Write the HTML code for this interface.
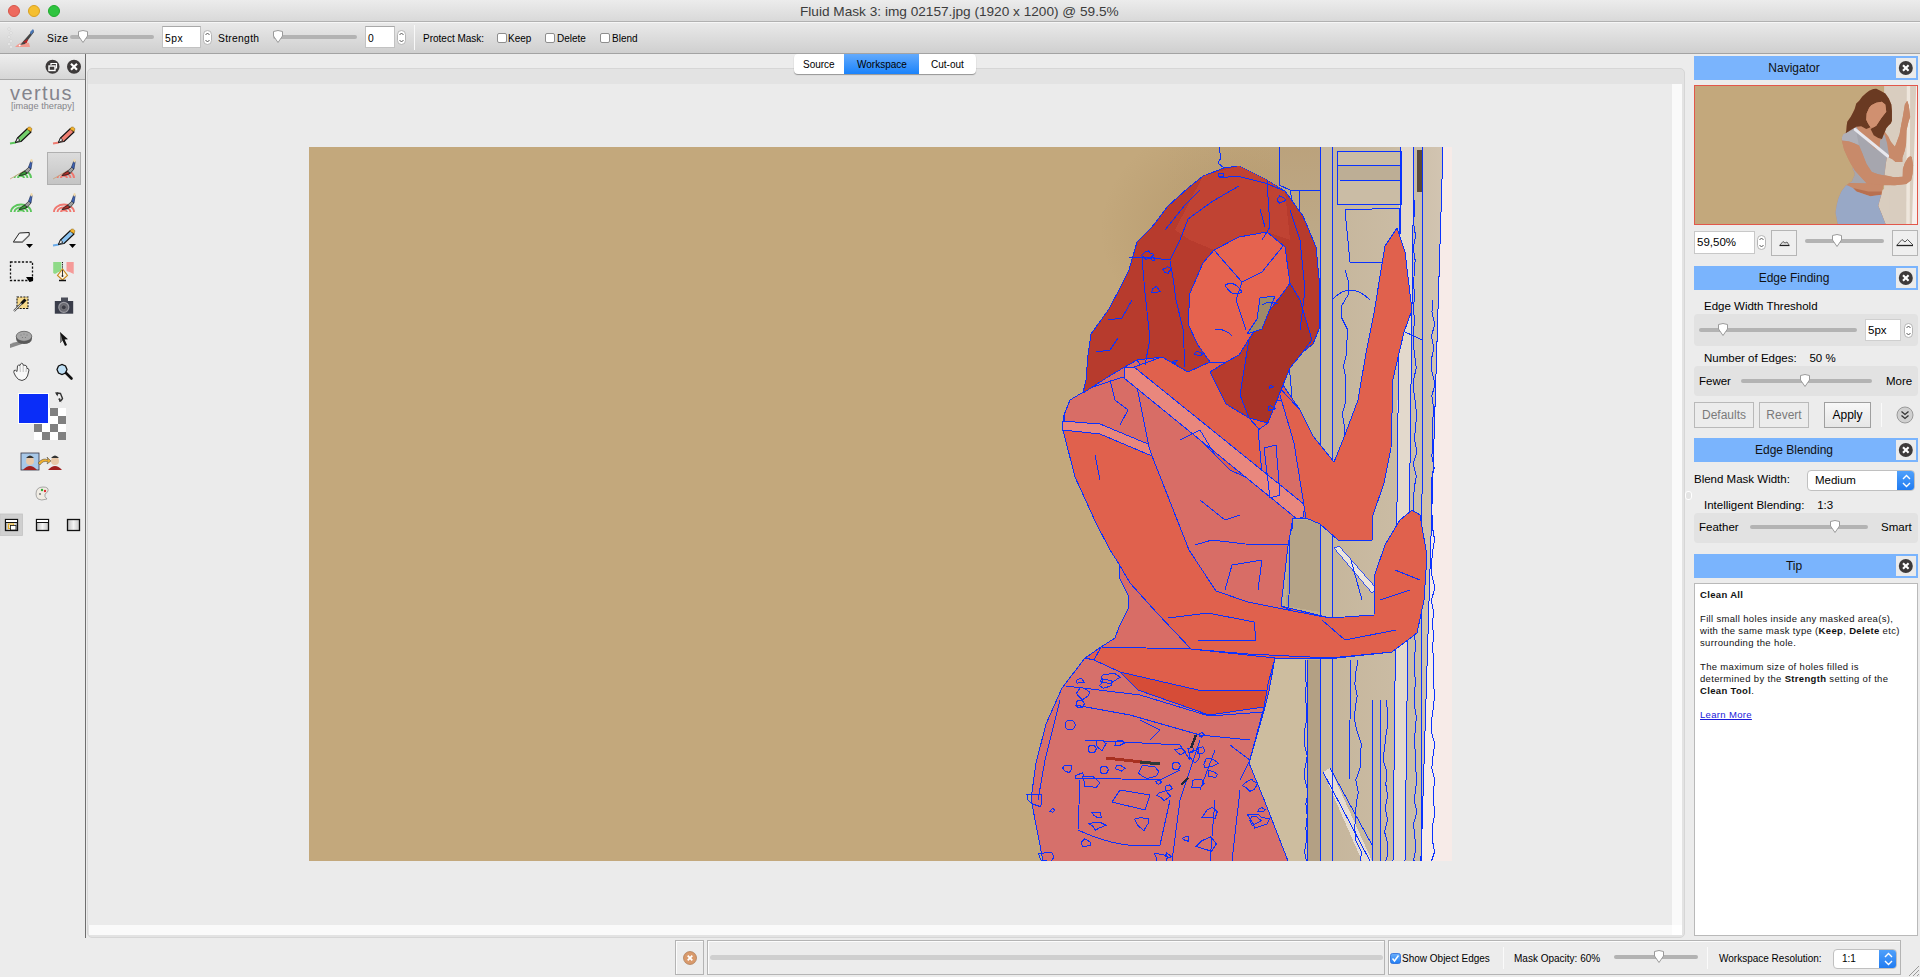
<!DOCTYPE html>
<html><head><meta charset="utf-8">
<style>
*{margin:0;padding:0;box-sizing:border-box}
html,body{width:1920px;height:977px;overflow:hidden;background:#ececec;font-family:"Liberation Sans",sans-serif;color:#000}
.a{position:absolute}
.t{position:absolute;white-space:nowrap;font-size:11px;line-height:13px}
#title{left:0;top:0;width:1920px;height:22px;background:linear-gradient(#ececec,#d9d9d9);border-bottom:1px solid #b1b1b1}
#toolbar{left:0;top:22px;width:1920px;height:32px;background:linear-gradient(#e9e9e9,#cfcfcf);border-top:1px solid #f6f6f6;border-bottom:1px solid #a3a3a3}
.light{position:absolute;width:12px;height:12px;border-radius:50%}
.track{position:absolute;height:4px;background:#b3b3b3;border-radius:2px}
.thumb{position:absolute;width:12px;height:14px}
.inp{position:absolute;background:#fff;border:1px solid #c2c2c2;border-top-color:#a8a8a8}
.step{position:absolute;width:9px;height:15px;background:#fff;border:1px solid #b9b9b9;border-radius:5px}
.cb{position:absolute;width:10px;height:10px;background:#fff;border:1px solid #8e8e8e;border-radius:2px}
.hdr{position:absolute;left:1694px;width:224px;height:24px;background:#7ab4fd;font-size:12px;line-height:24px;text-align:center;color:#111;padding-right:24px}
.hdr .x{position:absolute;right:2px;top:2px;width:20px;height:20px;background:#ebebeb}
.closec{position:absolute;width:14px;height:14px;border-radius:50%;background:#3a3a3a}
.grp{position:absolute;left:1694px;width:224px;background:#e2e2e2;border-radius:4px}
.btn{position:absolute;border:1px solid #b9b9b9;background:#ececec;font-size:12px;text-align:center}
</style></head><body>

<!-- title bar -->
<div id="title" class="a"></div>
<div class="light" style="left:8px;top:5px;background:#ee6a5e;border:1px solid #d65548"></div>
<div class="light" style="left:28px;top:5px;background:#f5bf2f;border:1px solid #d9a020"></div>
<div class="light" style="left:48px;top:5px;background:#2ec43f;border:1px solid #1faa2c"></div>
<div class="t" style="left:800px;top:4px;font-size:13.65px;line-height:15px;color:#3c3c3c">Fluid Mask 3: img 02157.jpg (1920 x 1200) @ 59.5%</div>

<!-- toolbar -->
<div id="toolbar" class="a"></div>
<svg class="a" style="left:6px;top:27px" width="30" height="22" viewBox="0 0 30 22">
 <g fill="#f4f4f4" stroke="#c9c9c9" stroke-width="0.6"><circle cx="3" cy="2" r="1.3"/><circle cx="5" cy="6" r="1.3"/><circle cx="3" cy="10" r="1.3"/><circle cx="5" cy="14" r="1.3"/><circle cx="3" cy="17" r="1.3"/><circle cx="5" cy="20" r="1.3"/></g>
 <path d="M9 20 Q16 13 23 16 L24 20 Z" fill="#f29a8f"/>
 <path d="M13 19 Q18 14 22 15" stroke="#fff" stroke-width="1.2" fill="none"/>
 <path d="M14 18 L27 3 L28 5 L19 17 Z" fill="#444"/>
 <path d="M17 15 L22 12 L21 16 Z" fill="#b22"/>
 <path d="M24 5 L27 2 L28 4 L25 8 Z" fill="#4a78b8"/>
</svg>
<div class="t" style="left:47px;top:32px;font-size:10.3px;letter-spacing:0.3px">Size</div>
<div class="track" style="left:70px;top:35px;width:84px"></div>
<svg class="thumb" style="left:77px;top:30px" width="12" height="14" viewBox="0 0 12 14"><path d="M1.5 1.5 Q6 -0.5 10.5 1.5 L10.5 6 L6 12.5 L1.5 6 Z" fill="#fff" stroke="#9a9a9a" stroke-width="1"/></svg>
<div class="inp" style="left:162px;top:26px;width:39px;height:22px"></div>
<div class="t" style="left:165px;top:32px;font-size:10.3px;letter-spacing:0.5px">5px</div>
<svg class="a" style="left:203px;top:30px" width="9" height="15" viewBox="0 0 9 15"><rect x="0.5" y="0.5" width="8" height="14" rx="4" fill="#fff" stroke="#b5b5b5"/><path d="M2.5 5 L4.5 3 L6.5 5 M2.5 10 L4.5 12 L6.5 10" stroke="#444" fill="none" stroke-width="0.9"/></svg>
<div class="t" style="left:218px;top:32px;font-size:10.3px;letter-spacing:0.3px">Strength</div>
<div class="track" style="left:273px;top:35px;width:84px"></div>
<svg class="thumb" style="left:272px;top:30px" width="12" height="14" viewBox="0 0 12 14"><path d="M1.5 1.5 Q6 -0.5 10.5 1.5 L10.5 6 L6 12.5 L1.5 6 Z" fill="#fff" stroke="#9a9a9a" stroke-width="1"/></svg>
<div class="inp" style="left:365px;top:26px;width:30px;height:22px"></div>
<div class="t" style="left:368px;top:32px;font-size:10.3px">0</div>
<svg class="a" style="left:397px;top:30px" width="9" height="15" viewBox="0 0 9 15"><rect x="0.5" y="0.5" width="8" height="14" rx="4" fill="#fff" stroke="#b5b5b5"/><path d="M2.5 5 L4.5 3 L6.5 5 M2.5 10 L4.5 12 L6.5 10" stroke="#444" fill="none" stroke-width="0.9"/></svg>
<div class="a" style="left:414px;top:25px;width:1px;height:25px;background:#b0b0b0;border-right:1px solid #f8f8f8"></div>
<div class="t" style="left:423px;top:32px;font-size:10px">Protect Mask:</div>
<div class="cb" style="left:497px;top:33px"></div><div class="t" style="left:508px;top:32px;font-size:10px">Keep</div>
<div class="cb" style="left:545px;top:33px"></div><div class="t" style="left:557px;top:32px;font-size:10px">Delete</div>
<div class="cb" style="left:600px;top:33px"></div><div class="t" style="left:612px;top:32px;font-size:10px">Blend</div>

<!-- left panel -->
<div id="leftpanel">
<div class="a" style="left:0;top:54px;width:85px;height:26px;background:linear-gradient(#eeeeee,#d6d6d6);border-bottom:1px solid #a9a9a9"></div>
<div class="a" style="left:85px;top:54px;width:1px;height:884px;background:#6e6e6e"></div>
<svg class="a" style="left:45px;top:59px" width="37" height="16" viewBox="0 0 37 16">
 <circle cx="7.5" cy="7.8" r="7" fill="#3d3a3a"/>
 <rect x="4" y="7" width="6" height="4.5" fill="none" stroke="#fff" stroke-width="1.4"/>
 <path d="M6 6 V4.5 H11.5 V9 H10" fill="none" stroke="#fff" stroke-width="1.2"/>
 <circle cx="29" cy="7.8" r="7" fill="#3d3a3a"/>
 <path d="M26 4.8 L32 10.8 M32 4.8 L26 10.8" stroke="#fff" stroke-width="2.2"/>
</svg>
<div class="t" style="left:10px;top:82px;font-size:20px;line-height:22px;color:#84848c;letter-spacing:1.4px">vertus</div>
<div class="t" style="left:11px;top:101px;font-size:9.2px;line-height:11px;color:#85858a">[image therapy]</div>
<div class="a" style="left:47px;top:152px;width:34px;height:33px;background:linear-gradient(#dcdcdc,#c4c4c4);border:1px solid #b0b0b0"></div>
<svg class="a" style="left:0;top:115px" width="85" height="430" viewBox="0 115 85 430">
 <!-- row1 pencils -->
<g transform="translate(10,128)">
  <path d="M0 15.5 L6 14.5" stroke="#5cc65c" stroke-width="1.8"/>
  <path d="M5.5 14.5 L7.5 10 L17.5 0.5 L21 4 L11 13.5 Z" fill="#73cf6c" stroke="#111" stroke-width="1.1" stroke-linejoin="round"/>
  <path d="M5.5 14.5 L7.5 10 L10 12.2 Z" fill="#f2f2f2" stroke="#111" stroke-width="0.7"/>
  <path d="M16.8 1.2 L18.5 -1 Q20.5 -1.5 21.8 0.5 Q22 2.2 21 3.5 Z" fill="#f3b32c" stroke="#7a5a10" stroke-width="0.5"/>
</g><g transform="translate(53,128)">
  <path d="M0 15.5 L6 14.5" stroke="#ee7b70" stroke-width="1.8"/>
  <path d="M5.5 14.5 L7.5 10 L17.5 0.5 L21 4 L11 13.5 Z" fill="#ee7f72" stroke="#111" stroke-width="1.1" stroke-linejoin="round"/>
  <path d="M5.5 14.5 L7.5 10 L10 12.2 Z" fill="#f2f2f2" stroke="#111" stroke-width="0.7"/>
  <path d="M16.8 1.2 L18.5 -1 Q20.5 -1.5 21.8 0.5 Q22 2.2 21 3.5 Z" fill="#f3b32c" stroke="#7a5a10" stroke-width="0.5"/>
</g><g transform="translate(10,159)">
  <clipPath id="cp10159"><path d="M0 20 L22 7 L22 20 Z"/></clipPath>
  <g fill="none" stroke="#5cc65c" stroke-width="1.9" clip-path="url(#cp10159)">
  <path d="M1 19 A10 8 0 0 1 21 19"/><path d="M4.5 19 A6.5 5 0 0 1 17.5 19"/><path d="M8 19 A3 2.2 0 0 1 14 19"/></g>
  <path d="M0 20 L14 12" stroke="#c9a27a" stroke-width="0.8"/>
  <path d="M9 16.5 Q11 13.5 15 12 L17.5 14 Q15 16.5 9 16.5 Z" fill="#3a9a3a" stroke="#111" stroke-width="0.8"/>
  <path d="M14.5 12.2 L19 8 L21 10 L17.5 14 Z" fill="#9c9c9c" stroke="#222" stroke-width="0.7"/>
  <path d="M18.5 8.2 L20.8 2 L22.2 2.4 L21 10 Z" fill="#3d62b5" stroke="#1a2a50" stroke-width="0.6"/>
  <ellipse cx="21.5" cy="1.8" rx="1.2" ry="1.8" fill="#f0d8a8"/>
</g><g transform="translate(53,159)">
  <clipPath id="cp53159"><path d="M0 20 L22 7 L22 20 Z"/></clipPath>
  <g fill="none" stroke="#f07870" stroke-width="1.9" clip-path="url(#cp53159)">
  <path d="M1 19 A10 8 0 0 1 21 19"/><path d="M4.5 19 A6.5 5 0 0 1 17.5 19"/><path d="M8 19 A3 2.2 0 0 1 14 19"/></g>
  <path d="M0 20 L14 12" stroke="#c9a27a" stroke-width="0.8"/>
  <path d="M9 16.5 Q11 13.5 15 12 L17.5 14 Q15 16.5 9 16.5 Z" fill="#b0302a" stroke="#111" stroke-width="0.8"/>
  <path d="M14.5 12.2 L19 8 L21 10 L17.5 14 Z" fill="#9c9c9c" stroke="#222" stroke-width="0.7"/>
  <path d="M18.5 8.2 L20.8 2 L22.2 2.4 L21 10 Z" fill="#3d62b5" stroke="#1a2a50" stroke-width="0.6"/>
  <ellipse cx="21.5" cy="1.8" rx="1.2" ry="1.8" fill="#f0d8a8"/>
</g><g transform="translate(10,193)">
  <g fill="none" stroke="#5cc65c" stroke-width="1.9">
  <path d="M1 19 A10 7.5 0 0 1 21 19"/><path d="M4.5 19 A6.5 4.5 0 0 1 17.5 19"/><path d="M8 19 A3 1.8 0 0 1 14 19"/></g>
  <path d="M9 16.5 Q11 13.5 15 12 L17.5 14 Q15 16.5 9 16.5 Z" fill="#3a9a3a" stroke="#111" stroke-width="0.8"/>
  <path d="M14.5 12.2 L19 8 L21 10 L17.5 14 Z" fill="#9c9c9c" stroke="#222" stroke-width="0.7"/>
  <path d="M18.5 8.2 L20.8 2 L22.2 2.4 L21 10 Z" fill="#3d62b5" stroke="#1a2a50" stroke-width="0.6"/>
  <ellipse cx="21.5" cy="1.8" rx="1.2" ry="1.8" fill="#f0d8a8"/>
</g><g transform="translate(53,193)">
  <g fill="none" stroke="#f07870" stroke-width="1.9">
  <path d="M1 19 A10 7.5 0 0 1 21 19"/><path d="M4.5 19 A6.5 4.5 0 0 1 17.5 19"/><path d="M8 19 A3 1.8 0 0 1 14 19"/></g>
  <path d="M9 16.5 Q11 13.5 15 12 L17.5 14 Q15 16.5 9 16.5 Z" fill="#b0302a" stroke="#111" stroke-width="0.8"/>
  <path d="M14.5 12.2 L19 8 L21 10 L17.5 14 Z" fill="#9c9c9c" stroke="#222" stroke-width="0.7"/>
  <path d="M18.5 8.2 L20.8 2 L22.2 2.4 L21 10 Z" fill="#3d62b5" stroke="#1a2a50" stroke-width="0.6"/>
  <ellipse cx="21.5" cy="1.8" rx="1.2" ry="1.8" fill="#f0d8a8"/>
</g>
 <!-- row4 eraser, blue pencil -->
 <path d="M13.3 242 L19.4 233 L29.2 232.5 L29.2 235.5 L22 242.2 Z" fill="#f6f6f6" stroke="#222" stroke-width="1" stroke-linejoin="round"/>
 <path d="M13.5 242 L22 242.2 L29 235.6" fill="none" stroke="#777" stroke-width="1.4"/>
 <path d="M26 244 L33 244 L29.5 248 Z" fill="#000"/>
 <g transform="translate(53,230)">
  <path d="M0 15.5 L6 14.5" stroke="#6aaae8" stroke-width="1.8"/>
  <path d="M5.5 14.5 L7.5 10 L17.5 0.5 L21 4 L11 13.5 Z" fill="#8cc4f2" stroke="#111" stroke-width="1.1" stroke-linejoin="round"/>
  <path d="M5.5 14.5 L7.5 10 L10 12.2 Z" fill="#f2f2f2" stroke="#111" stroke-width="0.7"/>
  <path d="M16.8 1.2 L18.5 -1 Q20.5 -1.5 21.8 0.5 Q22 2.2 21 3.5 Z" fill="#f3b32c" stroke="#7a5a10" stroke-width="0.5"/>
 </g>
 <path d="M69 244 L76 244 L72.5 248 Z" fill="#000"/>
 <!-- row5 marquee, pen -->
 <rect x="10.5" y="262" width="22" height="18.5" fill="none" stroke="#111" stroke-width="1.3" stroke-dasharray="2.2 1.6"/>
 <path d="M26 277 L33 277 L33 281 L29.5 282 Z" fill="#000"/>
 <path d="M53.2 262 H61.4 V271 Q58 272 55 274 L53.2 273 Z" fill="#8fda88"/>
 <path d="M66.5 262 H73.7 V274 Q70 272 66.5 271 Z" fill="#f59a98"/>
 <path d="M62.5 262 V270" stroke="#111" stroke-width="1" stroke-dasharray="1.2 1"/>
 <path d="M62.5 269 L57.5 275.5 L62.5 280 L67.5 275.5 Z" fill="#fbf2e0" stroke="#c8881a" stroke-width="1.1"/>
 <path d="M62.5 270 V276" stroke="#222" stroke-width="0.9"/><circle cx="62.5" cy="276" r="0.9" fill="#222"/>
 <path d="M59 280.5 H66" stroke="#111" stroke-width="1.5"/>
 <!-- row6 -->
 <rect x="17" y="297" width="11" height="11.5" fill="#f6d98a" stroke="#111" stroke-dasharray="2 1.2" stroke-width="1.1"/>
 <path d="M14 311 L24.5 300.5" stroke="#555" stroke-width="2.2"/><path d="M14 311 L24.5 300.5" stroke="#e8e8e8" stroke-width="0.8"/>
 <path d="M21.5 303.5 L25.5 299.5" stroke="#111" stroke-width="3"/>
 <path d="M54.8 301 H73.2 V313.7 H54.8 Z" fill="#3a3d4a"/><rect x="61" y="297.5" width="7" height="4" fill="#4a4d58"/>
 <circle cx="63.8" cy="307.3" r="5" fill="#6a6a72" stroke="#9a9aa0" stroke-width="1.2"/><circle cx="63.8" cy="307.3" r="2.4" fill="#3a3a44" stroke="#888" stroke-width="0.6"/>
 <!-- row7 -->
 <path d="M10 347 L10 344 Q15 342 21 341 L22 344 Q16 346 10 348 Z" fill="#8a8a8a"/>
 <ellipse cx="24" cy="338.5" rx="8" ry="5.5" fill="#5a5a5a"/>
 <ellipse cx="24" cy="336.3" rx="7.8" ry="5" fill="#a8a8a8" stroke="#555" stroke-width="0.7"/>
 <g fill="#777"><circle cx="21" cy="335" r="0.6"/><circle cx="24" cy="334" r="0.6"/><circle cx="27" cy="335" r="0.6"/><circle cx="22.5" cy="337.5" r="0.6"/><circle cx="25.5" cy="337.5" r="0.6"/></g>
 <path d="M60 332 L60 343 L62.5 340.5 L65 346 L67 345 L64.6 339.6 L68 339.3 Z" fill="#111"/>
 <path d="M60 332 L60 343 L62.5 340.5 Z" fill="#777"/>
 <!-- row8 hand, magnifier -->
 <path d="M15.5 376 Q13 372 14 370.5 Q15.5 369.5 17 371.5 L17.5 366 Q18.5 364 20 365.5 L20.5 364 Q21.5 362.5 23 364 L23.5 365.5 Q25 364.5 26.5 366 L27 368.5 Q28.5 368 29 370 L27.5 376 Q26 380 22 380.5 Q18 380.5 15.5 376 Z" fill="#f8f8f8" stroke="#333" stroke-width="0.9"/>
 <path d="M20 366 L20.3 372 M23.2 365 L23.2 372 M26.5 367 L26 372" stroke="#999" stroke-width="0.6"/>
 <path d="M58.5 366 L62 364.5 L65.5 366 L67 369.5 L65.5 373 L62 374.5 L58.5 373 L57 369.5 Z" fill="#bfe0f6" stroke="#111" stroke-width="1.3"/>
 <path d="M66 373 L71.5 378.5" stroke="#111" stroke-width="2.6" stroke-linecap="round"/>
 <!-- swap arrows -->
 <path d="M56.5 394.5 Q58 392.5 60.5 393.5 L62.5 398.5 Q61.5 401 59 401" stroke="#333" stroke-width="1.4" fill="none"/>
 <path d="M55 392.5 L57.5 396.5 L58.5 392 Z M58 399 L61.5 402.5 L60 398 Z" fill="#333"/>
 <!-- checker -->
 <rect x="34" y="408" width="32" height="32" fill="#fff"/>
 <g fill="#808080"><rect x="50" y="408" width="8" height="8"/><rect x="58" y="416" width="8" height="8"/><rect x="34" y="424" width="8" height="8"/><rect x="50" y="424" width="8" height="8"/><rect x="42" y="432" width="8" height="8"/><rect x="58" y="432" width="8" height="8"/></g>
 <!-- picture icon -->
 <rect x="21" y="453" width="18" height="17" fill="#a8c8e8" stroke="#334" stroke-width="0.8"/>
 <circle cx="30" cy="461" r="4" fill="#e8c8a8"/><path d="M23 470 Q30 462 37 470 Z" fill="#a02020"/><path d="M26 458 Q30 453 34 458 Z" fill="#333"/>
 <path d="M38 463 Q43 457 48 460 L47 457 L51 461 L47 464 L48 462 Q43 460 40 465 Z" fill="#f0b030" stroke="#444" stroke-width="0.5"/>
 <circle cx="55" cy="461" r="4" fill="#e8c8a8"/><path d="M48 470 Q55 462 62 470 Z" fill="#a02020"/><path d="M51 458 Q55 453 59 458 Z" fill="#333"/>
 <!-- palette -->
 <path d="M36 494 Q36 487 43 487 Q49 487 48 491 Q47 493 45 494 Q44 497 47 499 Q41 501 38 499 Q36 497 36 494 Z" fill="#f0ece4" stroke="#888" stroke-width="0.7"/>
 <circle cx="42" cy="490" r="1.2" fill="#3a3"/><circle cx="45" cy="491" r="1.2" fill="#d33"/><circle cx="40" cy="494" r="1" fill="#777"/>
 <!-- bottom views -->
 <defs><linearGradient id="gg" x1="0" x2="1"><stop offset="0" stop-color="#bdbdbd"/><stop offset="0.5" stop-color="#f4f4f4"/><stop offset="1" stop-color="#c4c4c4"/></linearGradient></defs>
 <rect x="0" y="514" width="22.5" height="21.5" fill="#cfcfcf" stroke="#c2c2c2" stroke-width="0.8"/>
 <rect x="5.5" y="519.5" width="12" height="11" fill="url(#gg)" stroke="#111" stroke-width="1.3"/>
 <rect x="6" y="520" width="11" height="2" fill="#fff"/><path d="M5.5 522.5 H17.5" stroke="#111" stroke-width="1"/>
 <rect x="8.5" y="524" width="5" height="4.5" fill="none" stroke="#e8b020" stroke-width="1.1"/>
 <rect x="10.5" y="525.5" width="5.5" height="4.5" fill="#fff" stroke="#111" stroke-width="0.8"/>
 <rect x="36.5" y="519.5" width="12" height="11" fill="url(#gg)" stroke="#111" stroke-width="1.3"/>
 <rect x="37" y="520" width="11" height="2" fill="#fff"/><path d="M36.5 522.5 H48.5" stroke="#111" stroke-width="1"/>
 <rect x="67.5" y="519.5" width="12" height="11" fill="url(#gg)" stroke="#111" stroke-width="1.3"/>
</svg>
<div class="a" style="left:18px;top:393px;width:31px;height:31px;background:#0a2df8;border:1px solid #fff"></div>
</div>

<!-- canvas -->
<div id="canvas">
<div class="a" style="left:87px;top:68px;width:1598px;height:870px;background:#e3e3e3;border-radius:5px;border:1px solid #d6d6d6"></div>
<div class="a" style="left:88px;top:84px;width:1584px;height:841px;background:#ebebeb"></div>
<div class="a" style="left:1672px;top:84px;width:10px;height:841px;background:#fafafa"></div>
<div class="a" style="left:89px;top:925px;width:1583px;height:10px;background:#fafafa"></div>
<div class="a" style="left:1672px;top:925px;width:10px;height:10px;background:#fff"></div>
<div class="a" style="left:794px;top:54px;width:182px;height:20px;background:#fff;border-radius:4px;box-shadow:0 1px 1px rgba(0,0,0,0.35)"></div>
<div class="a" style="left:844px;top:54px;width:75px;height:20px;background:linear-gradient(#63aafc,#1a83fb)"></div>
<div class="t" style="left:803px;top:58px;font-size:10px">Source</div>
<div class="t" style="left:857px;top:58px;font-size:10px">Workspace</div>
<div class="t" style="left:931px;top:58px;font-size:10px">Cut-out</div>
<!--IMG--><svg class="a" style="left:309px;top:147px" width="1143" height="714" viewBox="309 147 1143 714" shape-rendering="crispEdges">
<defs>
 <linearGradient id="tanshade" x1="0" x2="1"><stop offset="0" stop-color="#c3a87c"/><stop offset="0.75" stop-color="#c3a87c"/><stop offset="1" stop-color="#b9a07a"/></linearGradient>
 <radialGradient id="shade" cx="0.5" cy="0.5" r="0.5"><stop offset="0" stop-color="#8a6a40" stop-opacity="0.22"/><stop offset="0.6" stop-color="#8a6a40" stop-opacity="0.10"/><stop offset="1" stop-color="#8a6a40" stop-opacity="0"/></radialGradient>
 <linearGradient id="walltop" x1="0" y1="0" x2="0" y2="1"><stop offset="0" stop-color="#bba27c"/><stop offset="1" stop-color="#bfae90"/></linearGradient>
 <linearGradient id="doorg" x1="0" x2="1"><stop offset="0" stop-color="#c2b194"/><stop offset="0.3" stop-color="#c6b69c"/><stop offset="0.65" stop-color="#cabba3"/><stop offset="1" stop-color="#d3c6b4"/></linearGradient>
</defs>
<rect x="309" y="147" width="1143" height="714" fill="url(#tanshade)"/>
<ellipse cx="1230" cy="230" rx="130" ry="110" fill="url(#shade)"/>
<path d="M1219 147 L1221 158 L1218 163 L1224 168" fill="none" stroke="#0a32ff" stroke-width="1"/>
<polygon points="1279,147 1452,147 1452,861 1288,861 1279,700" fill="url(#doorg)"/>
<polygon points="1279,147 1320,147 1320,861 1288,861 1279,700" fill="#bfae90"/>
<polygon points="1279,147 1320,147 1320,300 1279,300" fill="url(#walltop)"/>
<polygon points="1269,655 1307,655 1307,861 1288,861 1265,802 1249,763 1262,700" fill="#cdbd9f"/>
<polygon points="1307,660 1320,660 1320,861 1307,861" fill="#b3a084"/>
<polygon points="1290,520 1320,520 1320,612 1286,606" fill="#b5a386"/>
<polygon points="1334,548 1339,546 1376,588 1372,593" fill="#ece6dc" stroke="#0a32ff" stroke-width="0.8"/>
<polygon points="1320,147 1332,147 1332,861 1320,861" fill="#c8b9a0"/>
<polygon points="1400,147 1414,147 1405,861 1393,861" fill="#e3d9cc"/>
<polygon points="1414,147 1423,147 1421,861 1405,861" fill="#c9bda9"/>
<polygon points="1443,147 1452,147 1452,861 1421,861" fill="#f7ebe8"/>
<polygon points="1337,151 1401,151 1401,204 1337,204" fill="#cabca5"/>
<polygon points="1337,165 1400,165 1400,180 1337,180" fill="#bdae95"/>
<polygon points="1323,772 1330,768 1372,861 1362,861" fill="#e6ddd2"/>
<rect x="1417" y="150" width="5" height="42" fill="#5a4a3a"/>
<g fill="none" stroke="#0a32ff" stroke-width="1">
 <path d="M1290 300 L1287.8 312 L1292.1 324 L1291.6 336 L1288.5 348 L1290.0 360 L1289.7 372 L1290.9 384 L1291.7 396 L1287.6 408 L1287.2 420 L1292.0 432 L1289.6 444 L1291.6 456 L1287.0 468 L1289.7 480 L1291.3 492 L1288.4 504 L1292.7 516 L1292.4 528 L1287.2 540 M1345 270 L1348.6 282 L1348.6 294 L1341.5 306 L1341.7 318 L1347.7 330 L1346.9 342 L1346.4 354 L1343.5 366 L1345.8 378 L1345.9 390 L1345.6 402 L1342.3 414 L1344.4 426 L1344.1 438 L1346.8 450 L1349.0 462 L1348.6 474 L1345.4 486 L1344.6 498 L1343.1 510 L1341.3 522 L1341.2 534 L1344.7 540 M1306 660 L1305.0 672 L1306.2 684 L1305.5 696 L1306.4 708 L1306.5 720 L1304.3 732 L1304.1 744 L1307.3 756 L1305.0 768 L1304.9 780 L1308.0 792 L1305.9 804 L1307.3 816 L1305.9 828 L1306.6 840 L1304.6 852 L1306.5 861 M1358 660 L1355.9 672 L1354.8 684 L1357.2 696 L1355.2 708 L1354.5 720 L1357.2 732 L1361.3 744 L1360.4 756 L1360.1 768 L1355.8 780 L1358.3 792 L1356.2 804 L1355.4 816 L1354.8 828 L1355.7 840 L1361.4 852 L1360.6 861 M1386 700 L1387.8 712 L1387.9 724 L1385.9 736 L1384.6 748 L1383.0 760 L1387.0 772 L1385.8 784 L1387.6 796 L1385.2 808 L1387.6 820 L1384.6 832 L1387.8 844 L1387.4 856 L1385.5 861 M1415 200 L1414.3 212 L1413.6 224 L1415.6 236 L1413.3 248 L1415.1 260 L1414.5 272 L1413.2 284 L1415.0 296 L1413.1 308 L1414.7 320 L1413.3 332 L1413.4 344 L1414.7 356 L1416.3 368 L1413.5 380 L1413.9 392 L1415.5 404 L1416.8 416 L1415.3 428 L1414.6 440 L1416.9 452 L1413.2 464 L1416.4 476 L1414.2 488 L1413.6 500 L1413.5 512 L1414.2 524 L1416.3 536 L1413.7 548 L1415.3 560 L1415.6 572 L1414.5 584 L1415.2 596 L1413.3 608 L1413.2 620 L1413.8 632 L1415.7 644 L1414.7 656 L1414.3 668 L1415.3 680 L1414.8 692 L1414.2 704 L1416.2 716 L1415.8 728 L1414.0 740 L1415.3 752 L1415.1 764 L1416.5 776 L1415.9 788 L1414.2 800 L1416.9 812 L1413.5 824 L1414.7 836 L1416.0 848 L1413.6 860 L1415.0 861 M1433 300 L1431.9 312 L1434.8 324 L1431.5 336 L1433.8 348 L1431.3 360 L1432.0 372 L1435.0 384 L1431.8 396 L1433.6 408 L1432.8 420 L1432.8 432 L1433.0 444 L1431.8 456 L1434.3 468 L1431.4 480 L1431.9 492 L1431.1 504 L1432.1 516 L1432.6 528 L1434.6 540 L1432.5 552 L1431.5 564 L1432.0 576 L1435.0 588 L1431.3 600 L1433.5 612 L1432.5 624 L1433.6 636 L1432.4 648 L1433.8 660 L1433.0 672 L1433.6 684 L1434.6 696 L1433.3 708 L1431.6 720 L1431.3 732 L1434.8 744 L1433.0 756 L1431.8 768 L1434.8 780 L1433.3 792 L1433.9 804 L1434.5 816 L1432.1 828 L1432.4 840 L1434.5 852 L1431.5 861 M1300 190 L1299.8 202 L1299.2 214 L1297.8 226 L1302.2 238 L1297.0 250 L1300.0 262 L1302.4 274 L1297.5 286 L1300.3 298 L1300.7 300"/>
 <path d="M1279 147 V185 L1290 190 H1320 M1320 147 V861 M1332 147 V861 M1401 147 L1393 861 M1414 147 L1405 861 M1423 147 L1421 861 M1443 147 L1421 861"/>
 <path d="M1337 151 H1401 V204 H1337 Z M1337 165 H1400 M1340 180 H1400 M1345 210 L1400 208 L1398 262 L1350 262 Z"/>
 <path d="M1307 660 V861 M1351 660 L1349 780 M1372 700 V861 M1380 700 V861 M1323 772 L1370 861 M1330 768 L1372 845"/>
 <path d="M1290 190 L1300 240 L1298 320 M1332 300 Q1350 280 1370 300 M1401 330 L1422 340 M1401 560 L1425 566 M1351 560 L1362 600 M1290 540 L1288 650"/>
</g>
<g stroke="#0a32ff" stroke-width="1" stroke-linejoin="round">
 <polygon points="1224,168 1239,166 1265,179 1285,191 1303,216 1316,247 1319,278 1319,329 1313,344 1303,352 1290,368 1283,385 1300,410 1313,436 1334,462 1343,440 1358,400 1366,353 1374,313 1385,246 1397,228 1405,252 1412,310 1404,332 1393,379 1391,448 1384,483 1372,518 1372,540 1338,540 1320,524 1306,518 1293,518 1288,546 1281,606 1330,618 1374,615 1375,574 1385,545 1400,520 1412,510 1420,515 1427,556 1424,600 1417,633 1392,652 1337,658 1275,658 1269,691 1265,707 1249,763 1265,802 1288,861 1043,861 1038,835 1031,799 1036,763 1046,724 1062,688 1085,658 1101,647 1115,638 1119,627 1128,609 1128,595 1119,577 1119,564 1110,550 1096,523 1075,477 1063,427 1064,415 1075,397 1083,393 1086,380 1088,355 1091,334 1109,309 1121,286 1129,270 1137,242 1152,227 1168,206 1188,188 1203,176" fill="#df5f4b"/>
 <polygon points="1075,397 1083,393 1111,375 1137,360 1150,380 1180,420 1230,470 1256,482 1258,430 1268,423 1277,400 1290,402 1304,478 1306,518 1293,518 1288,546 1281,606 1293,611 1248,602 1216,591 1189,550 1167,494 1151,460 1123,440 1064,430 1064,415" fill="#d86d66"/>
 <polygon points="1064,415 1070,400 1090,388 1120,378 1135,377 1150,452 1120,442 1064,430" fill="#d86d66"/>
 <polygon points="1062,421 1100,424 1148,444 1152,456 1100,434 1063,431" fill="#e9877d"/>
 <polygon points="1134,367 1162,357 1188,372 1210,362 1226,362 1239,355 1240,395 1249,418 1258,428 1262,474 1240,456 1200,421" fill="#e0614d"/>
 <polygon points="1124,368 1134,367 1305,505 1303,517 1297,519 1124,378" fill="#e9877d"/>
 <polygon points="1119,564 1130,583 1157,613 1191,649 1101,647 1115,638 1119,627 1128,609 1128,595 1119,577" fill="#d86d66"/>
 <polygon points="1101,647 1191,649 1275,658 1268,684 1264,707 1209,715 1138,681 1094,660" fill="#df5f4b"/>
 <polygon points="1277,385 1300,410 1313,436 1334,462 1343,440 1358,400 1366,353 1374,313 1385,246 1397,228 1405,252 1412,310 1404,332 1393,379 1391,448 1384,483 1372,518 1372,540 1338,540 1320,524 1306,518 1294,443" fill="#e0614d"/>
 <polygon points="1063,430 1100,434 1152,456 1167,494 1189,550 1216,591 1248,602 1293,611 1330,618 1374,615 1375,574 1385,545 1400,520 1412,510 1420,515 1427,556 1424,600 1417,633 1392,652 1330,658 1248,654 1191,649 1157,613 1130,583 1119,564 1110,550 1096,523 1075,477" fill="#e0614d"/>
 <polygon points="1120,672 1198,690 1267,690 1264,707 1209,715 1138,690" fill="#d64c37"/>
 <polygon points="1094,660 1120,672 1138,690 1209,715 1264,707 1249,763 1265,802 1288,861 1043,861 1038,835 1031,799 1036,763 1046,724 1062,688 1085,658" fill="#d6706b"/>
 <polygon points="1224,168 1239,166 1265,179 1285,191 1303,216 1316,247 1319,278 1319,329 1313,344 1303,352 1290,368 1283,385 1277,400 1268,423 1249,418 1226,404 1210,372 1226,362 1239,355 1249,339 1265,316 1283,293 1290,283 1285,247 1267,232 1239,237 1214,250 1203,263 1190,293 1188,324 1198,345 1210,362 1188,372 1162,357 1137,360 1111,375 1083,393 1086,380 1088,355 1091,334 1109,309 1121,286 1129,270 1137,242 1152,227 1168,206 1188,188 1203,176" fill="#b73b2d"/>
 <polygon points="1203,176 1239,166 1265,179 1285,191 1290,240 1267,232 1239,237 1214,250 1190,240 1175,230" fill="#c04333" stroke="none"/>
 <polygon points="1290,283 1300,300 1312,340 1303,352 1290,368 1283,385 1277,400 1268,423 1249,418 1240,395 1249,339 1265,316 1283,293" fill="#a83328"/>
 <polygon points="1214,250 1239,237 1267,232 1285,247 1290,283 1283,293 1265,316 1249,339 1239,355 1226,362 1210,362 1198,345 1188,324 1190,293 1203,263" fill="#e5634f"/>
 <polygon points="1260,298 1275,296 1262,329 1247,334 1257,319" fill="#a08a68"/>
</g>
<g fill="none" stroke="#0a32ff" stroke-width="1" stroke-linejoin="round">
 <path d="M1129 257 L1144 257 L1170 260 L1180 240 L1188 219 L1213 201 L1239 186 M1219 178 L1237 176 L1265 183 L1285 191 M1267 181 L1270 227 L1262 240 M1260 209 L1265 227"/>
 <path d="M1170 261 L1173 278 L1176 300 L1183 329 L1185 367 M1142 258 L1145 293 L1150 339 L1145 365 M1108 320 L1122 318 L1132 300 M1096 352 L1110 350 L1118 338 M1200 190 L1185 205 L1165 230 M1290 210 L1300 240 L1305 290 L1300 330"/>
 <path d="M1214 250 L1242 282 L1262 272 L1283 246 M1242 282 L1236 300 L1246 330 M1225 285 Q1235 280 1242 292 Q1232 298 1225 285 Z M1262 305 Q1270 300 1278 304 M1215 330 Q1225 328 1232 336"/>
 <path d="M1110 380 L1115 400 L1128 410 L1120 425 M1095 455 L1100 480 M1180 440 L1200 430 L1215 455 M1200 500 L1225 520 L1240 515 M1195 545 L1212 540 L1245 544 L1290 545 M1232 565 L1262 560 L1258 590 M1225 590 L1232 565 M1264 448 L1276 445 L1280 495 L1270 498 Z"/>
 <path d="M1168 618 L1208 613 L1254 622 L1256 640 L1198 640 M1322 620 L1345 640 L1396 630 M1395 570 L1420 580 M1380 600 L1410 590"/>
 <path d="M1066 686 L1140 695 L1209 716 L1264 712 M1075 705 L1130 715 L1200 735 L1250 740 M1085 740 L1180 745 L1190 760 M1082 778 L1160 780 L1180 770"/>
 <path d="M1080 780 L1078 830 Q1120 850 1160 845 L1170 800 M1060 700 L1045 760 L1038 800 M1200 740 L1180 800 L1172 861 M1215 750 L1200 790 M1240 790 L1232 861 M1215 800 L1210 861 M1120 790 L1150 795 L1145 810 L1112 802 Z"/>
 <path d="M1092 745 a4 4 0 1 0 0.1 0 M1104 766 a4 4 0 1 0 0.1 0 M1176 762 a4 4 0 1 0 0.1 0 M1070 720 a5 5 0 1 0 0.1 0 M1080 700 a4 4 0 1 0 0.1 0 M1140 720 L1160 730 L1150 740 M1230 745 L1250 760 L1240 780"/>
</g>
<path d="M1158.7 771.4 L1156.4 776.0 L1147.4 778.4 L1142.5 776.5 L1138.4 773.0 L1142.1 765.8 L1147.7 766.0 L1154.5 766.3 Z M1204.0 783.4 L1200.3 787.6 L1191.9 787.8 L1192.5 780.2 L1201.3 779.2 Z M1205.0 751.2 L1202.9 753.1 L1197.8 753.8 L1196.4 748.7 L1202.7 746.7 Z M1090.9 842.6 L1090.3 845.4 L1085.4 846.2 L1082.4 846.1 L1081.0 842.1 L1082.8 840.9 L1084.8 838.8 L1088.2 840.9 Z M1167.1 858.3 L1166.2 860.8 L1163.3 865.5 L1156.4 860.6 L1156.0 857.1 L1154.2 853.4 L1162.2 854.4 L1167.0 856.0 Z M1100.5 814.7 L1101.4 817.3 L1097.7 817.8 L1094.3 815.7 L1092.0 812.8 L1095.5 812.1 L1100.1 812.8 Z M1099.8 782.9 L1096.3 787.4 L1084.1 786.1 L1084.7 782.1 L1082.3 776.9 L1092.8 776.2 Z M1106.0 825.3 L1098.8 828.2 L1095.5 830.3 L1093.1 826.3 L1088.5 823.5 L1096.7 822.2 L1100.1 822.2 Z M1171.8 856.3 L1169.0 857.9 L1166.3 856.8 L1165.6 855.9 L1166.5 853.0 L1168.9 854.6 Z M1199.3 755.2 L1198.8 759.5 L1195.0 763.0 L1189.5 757.0 L1189.6 752.9 L1191.1 751.3 L1198.5 749.7 Z M1204.0 734.5 L1201.3 737.4 L1199.1 735.8 L1199.2 733.6 L1202.1 732.7 Z M1054.7 810.3 L1053.1 812.2 L1049.4 811.7 L1051.1 809.8 L1053.1 808.1 Z M1089.9 692.4 L1088.2 695.7 L1082.2 700.0 L1077.8 695.1 L1076.5 693.2 L1079.7 688.4 L1081.4 687.2 L1087.7 690.5 Z M1054.1 856.9 L1051.0 861.7 L1040.6 860.0 L1038.4 853.4 L1051.9 852.5 Z M1217.4 774.1 L1215.8 777.3 L1209.0 776.6 L1208.6 770.5 L1213.4 771.6 Z M1172.4 788.2 L1169.8 790.4 L1165.6 790.7 L1165.9 786.1 L1169.4 784.9 Z M1218.5 763.3 L1211.4 766.6 L1204.6 767.6 L1203.9 764.6 L1206.3 758.0 L1213.3 759.2 Z M1269.5 818.8 L1267.0 824.0 L1254.8 828.1 L1253.2 823.9 L1251.1 820.0 L1247.2 814.3 L1258.8 814.9 L1261.3 817.4 Z M1124.6 742.9 L1119.9 745.3 L1114.7 745.6 L1116.2 741.2 L1122.3 740.2 Z M1170.6 795.8 L1167.3 798.6 L1163.9 800.5 L1161.2 797.5 L1156.8 795.6 L1159.1 793.0 L1166.1 790.7 L1167.7 793.5 Z M1071.7 768.0 L1070.7 771.0 L1069.0 772.7 L1064.4 770.6 L1062.7 768.0 L1063.7 766.1 L1066.1 765.5 L1071.3 765.4 Z M1148.3 823.7 L1146.4 826.1 L1143.9 830.6 L1137.8 825.4 L1137.4 824.3 L1134.3 819.2 L1141.1 817.6 L1149.0 819.0 Z M1257.9 782.9 L1254.5 789.3 L1249.7 791.3 L1245.8 787.3 L1242.4 785.5 L1246.5 781.9 L1252.0 779.0 L1253.4 781.6 Z M1188.6 839.2 L1188.9 841.3 L1185.0 840.5 L1182.5 838.3 L1185.1 837.0 L1188.0 836.0 Z M1216.4 843.9 L1211.5 851.3 L1196.0 846.3 L1201.8 840.8 L1210.9 836.8 Z M1084.5 682.4 L1081.4 682.5 L1077.1 683.1 L1076.6 681.0 L1077.8 679.1 L1081.6 678.8 Z M1041.7 800.0 L1040.7 806.8 L1031.3 803.5 L1027.4 799.4 L1027.0 795.0 L1041.9 794.6 Z M1083.4 776.4 L1081.8 778.8 L1078.5 778.8 L1075.8 778.5 L1075.8 775.5 L1078.6 774.3 L1082.9 772.9 Z M1120.1 677.2 L1110.1 683.6 L1100.7 681.7 L1102.3 675.2 L1114.1 673.0 Z M1217.3 811.6 L1215.2 818.1 L1202.1 817.2 L1207.1 810.1 L1212.5 807.4 Z M1125.3 768.1 L1121.7 771.1 L1115.6 768.8 L1116.2 765.6 L1119.7 765.1 Z M1161.4 782.0 L1160.1 783.4 L1158.8 784.4 L1156.6 783.2 L1155.9 781.8 L1156.3 781.3 L1157.8 780.6 L1160.5 781.0 Z M1265.4 809.2 L1263.5 811.4 L1260.6 811.3 L1258.1 811.1 L1259.3 808.8 L1261.9 807.4 L1263.0 808.9 Z M1194.2 750.3 L1192.5 752.3 L1188.1 752.4 L1188.0 748.4 L1192.5 747.3 Z M1111.9 684.9 L1108.8 686.6 L1103.5 688.2 L1099.6 685.9 L1102.0 682.4 L1102.6 678.9 L1111.7 680.9 Z M1106.1 743.7 L1102.1 750.6 L1097.1 747.1 L1096.6 740.6 L1102.0 740.3 Z M1261.2 820.7 L1256.7 823.2 L1252.3 825.6 L1249.9 820.7 L1251.9 816.2 L1256.6 816.7 Z M1185.2 751.6 L1180.8 755.0 L1177.6 752.6 L1174.7 749.6 L1182.2 748.2 Z M1275.7 408.9 L1271.9 409.9 L1268.1 410.2 L1268.2 406.2 L1270.9 405.9 Z M1176.0 361.6 L1175.7 362.7 L1175.4 363.7 L1173.5 362.4 L1173.0 361.4 L1174.0 361.0 L1175.5 360.3 L1177.2 360.9 Z M1155.4 258.6 L1154.3 260.4 L1152.1 260.4 L1151.6 259.2 L1151.9 257.3 L1154.2 257.4 Z M1171.2 269.7 L1169.4 270.6 L1168.3 273.3 L1165.0 272.4 L1162.7 269.0 L1165.0 268.5 L1167.5 266.8 L1169.7 267.3 Z M1273.0 386.7 L1271.6 387.8 L1269.6 388.0 L1269.2 386.4 L1271.6 385.4 Z M1160.1 291.2 L1157.2 292.5 L1151.6 292.3 L1152.8 288.8 L1156.3 286.4 Z M1286.0 199.8 L1283.6 201.6 L1279.2 203.1 L1276.9 199.9 L1279.7 195.9 L1283.8 197.6 Z M1202.6 353.4 L1201.5 355.3 L1197.6 355.1 L1193.9 354.0 L1195.0 352.9 L1197.5 351.1 L1199.5 352.3 Z M1223.8 175.1 L1222.9 176.9 L1220.5 176.3 L1218.8 176.3 L1218.6 173.8 L1220.9 173.3 L1223.1 173.2 Z M1153.9 254.4 L1150.7 258.2 L1145.7 259.3 L1144.1 257.3 L1141.5 255.7 L1145.2 251.9 L1148.3 250.8 L1150.5 253.3 Z" fill="none" stroke="#0a32ff" stroke-width="1"/>
<path d="M1106 758 L1160 764" stroke="#a83020" stroke-width="3"/>
<path d="M1140 762 L1160 764" stroke="#303838" stroke-width="3"/>
<path d="M1196 735 L1191 748 M1188 778 L1181 785" stroke="#20283a" stroke-width="2.5"/>

</svg><!--/IMG-->
</div>

<!-- right panel -->
<div id="rightpanel">

<div class="hdr" style="top:56px">Navigator<div class="x"><svg width="20" height="20" viewBox="0 0 20 20" style="position:absolute;left:0;top:0"><circle cx="9.8" cy="10" r="7" fill="#3d3a3a"/><path d="M7 7.2 L12.6 12.8 M12.6 7.2 L7 12.8" stroke="#fff" stroke-width="2.1"/></svg></div></div>
<div class="a" style="left:1694px;top:85px;width:224px;height:140px;border:1px solid #e2574a;background:#c3a87c;overflow:hidden"><!--NAV--><svg class="a" style="left:0;top:0" width="222" height="138" viewBox="0 0 222 138">
<g transform="translate(-1,-1) scale(0.19598) translate(-309,-147)">
<rect x="309" y="147" width="1143" height="714" fill="#c3a87c"/>
<polygon points="1279,147 1452,147 1452,861 1288,861 1279,700" fill="#d9cdbf"/>
<polygon points="1262,690 1307,655 1307,861 1288,861 1265,802 1249,763" fill="#d9cdbf"/>
<polygon points="1395,147 1412,147 1410,861 1392,861" fill="#eee6dc"/>
<polygon points="1443,147 1452,147 1452,861 1421,861" fill="#f8f0ee"/>
<polygon points="1224,168 1239,166 1265,179 1285,191 1303,216 1316,247 1319,278 1319,329 1313,344 1303,352 1290,368 1283,385 1300,410 1313,436 1334,462 1343,440 1358,400 1366,353 1374,313 1385,246 1397,228 1405,252 1412,310 1404,332 1393,379 1391,448 1384,483 1372,518 1372,540 1338,540 1320,524 1306,518 1293,518 1288,546 1281,606 1330,618 1374,615 1375,574 1385,545 1400,520 1412,510 1420,515 1427,556 1424,600 1417,633 1392,652 1337,658 1275,658 1269,691 1265,707 1249,763 1265,802 1288,861 1043,861 1038,835 1031,799 1036,763 1046,724 1062,688 1085,658 1101,647 1115,638 1119,627 1128,609 1128,595 1119,577 1119,564 1110,550 1096,523 1075,477 1063,427 1064,415 1075,397 1083,393 1086,380 1088,355 1091,334 1109,309 1121,286 1129,270 1137,242 1152,227 1168,206 1188,188 1203,176" fill="#c88a6a"/>
<polygon points="1075,397 1083,393 1111,375 1137,360 1150,380 1180,420 1230,470 1256,482 1258,430 1268,423 1277,400 1290,402 1304,478 1306,518 1293,518 1288,546 1281,606 1293,611 1248,602 1216,591 1189,550 1167,494 1151,460 1123,440 1064,430 1064,415" fill="#a6a6ae"/>
<polygon points="1064,415 1070,400 1090,388 1120,378 1135,377 1150,452 1120,442 1064,430" fill="#b0b0b8"/>
<polygon points="1124,368 1134,367 1305,505 1303,517 1297,519 1124,378" fill="#e8e8ee"/>
<polygon points="1119,564 1130,583 1157,613 1191,649 1101,647 1115,638 1119,627 1128,609 1128,595 1119,577" fill="#a6a6ae"/>
<polygon points="1101,647 1191,649 1275,658 1268,684 1264,707 1209,715 1138,681 1094,660" fill="#c88a6a"/>
<polygon points="1277,385 1300,410 1313,436 1334,462 1343,440 1358,400 1366,353 1374,313 1385,246 1397,228 1405,252 1412,310 1404,332 1393,379 1391,448 1384,483 1372,518 1372,540 1338,540 1320,524 1306,518 1294,443" fill="#c88a6a"/>
<polygon points="1063,430 1100,434 1152,456 1167,494 1189,550 1216,591 1248,602 1293,611 1330,618 1374,615 1375,574 1385,545 1400,520 1412,510 1420,515 1427,556 1424,600 1417,633 1392,652 1330,658 1248,654 1191,649 1157,613 1130,583 1119,564 1110,550 1096,523 1075,477" fill="#c88a6a"/>
<polygon points="1120,672 1198,690 1267,690 1264,707 1209,715 1138,690" fill="#b87050"/>
<polygon points="1094,660 1120,672 1138,690 1209,715 1264,707 1249,763 1265,802 1288,861 1043,861 1038,835 1031,799 1036,763 1046,724 1062,688 1085,658" fill="#98a8c6"/>
<polygon points="1224,168 1239,166 1265,179 1285,191 1303,216 1316,247 1319,278 1319,329 1313,344 1303,352 1290,368 1283,385 1277,400 1268,423 1249,418 1226,404 1210,372 1226,362 1239,355 1249,339 1265,316 1283,293 1290,283 1285,247 1267,232 1239,237 1214,250 1203,263 1190,293 1188,324 1198,345 1210,362 1188,372 1162,357 1137,360 1111,375 1083,393 1086,380 1088,355 1091,334 1109,309 1121,286 1129,270 1137,242 1152,227 1168,206 1188,188 1203,176" fill="#6a3a22"/>
<polygon points="1214,250 1239,237 1267,232 1285,247 1290,283 1283,293 1265,316 1249,339 1239,355 1226,362 1210,362 1198,345 1188,324 1190,293 1203,263" fill="#d09070"/>
</g></svg><!--/NAV--></div>
<div class="inp" style="left:1694px;top:231px;width:61px;height:23px;border-color:#c8c8c8"></div>
<div class="t" style="left:1697px;top:236px;font-size:11.5px">59,50%</div>
<svg class="a" style="left:1757px;top:235px" width="9" height="15" viewBox="0 0 9 15"><rect x="0.5" y="0.5" width="8" height="14" rx="4" fill="#fff" stroke="#b5b5b5"/><path d="M2.5 5 L4.5 3 L6.5 5 M2.5 10 L4.5 12 L6.5 10" stroke="#444" fill="none" stroke-width="0.9"/></svg>
<div class="a" style="left:1771px;top:230px;width:26px;height:26px;border:1px solid #b5b5b5;background:#efefef"></div>
<svg class="a" style="left:1771px;top:230px" width="26" height="26" viewBox="0 0 26 26"><path d="M9 15 L12 11.5 L14 13 L16 12 L18 15" fill="#ddd" stroke="#555" stroke-width="0.9"/><path d="M8.5 15.5 H18.5" stroke="#222" stroke-width="1.2"/></svg>
<div class="track" style="left:1805px;top:239px;width:79px"></div>
<svg class="thumb" style="left:1831px;top:234px" width="12" height="14" viewBox="0 0 12 14"><path d="M1.5 1.5 Q6 -0.5 10.5 1.5 L10.5 6 L6 12.5 L1.5 6 Z" fill="#fff" stroke="#9a9a9a" stroke-width="1"/></svg>
<div class="a" style="left:1892px;top:230px;width:26px;height:26px;border:1px solid #b5b5b5;background:#efefef"></div>
<svg class="a" style="left:1892px;top:230px" width="26" height="26" viewBox="0 0 26 26"><path d="M5 15 L10 9.5 L13 12 L15.5 9.5 L21 15" fill="none" stroke="#444" stroke-width="0.9"/><path d="M4.5 15.5 H21" stroke="#222" stroke-width="1.3"/></svg>

<div class="hdr" style="top:266px">Edge Finding<div class="x"><svg width="20" height="20" viewBox="0 0 20 20" style="position:absolute;left:0;top:0"><circle cx="9.8" cy="10" r="7" fill="#3d3a3a"/><path d="M7 7.2 L12.6 12.8 M12.6 7.2 L7 12.8" stroke="#fff" stroke-width="2.1"/></svg></div></div>
<div class="t" style="left:1704px;top:300px;font-size:11.5px">Edge Width Threshold</div>
<div class="grp" style="top:314px;height:32px"></div>
<div class="track" style="left:1699px;top:328px;width:158px"></div>
<svg class="thumb" style="left:1717px;top:323px" width="12" height="14" viewBox="0 0 12 14"><path d="M1.5 1.5 Q6 -0.5 10.5 1.5 L10.5 6 L6 12.5 L1.5 6 Z" fill="#fff" stroke="#9a9a9a" stroke-width="1"/></svg>
<div class="inp" style="left:1865px;top:319px;width:36px;height:22px;border-color:#cfcfcf"></div>
<div class="t" style="left:1868px;top:324px;font-size:11.5px">5px</div>
<svg class="a" style="left:1904px;top:323px" width="9" height="15" viewBox="0 0 9 15"><rect x="0.5" y="0.5" width="8" height="14" rx="4" fill="#fff" stroke="#b5b5b5"/><path d="M2.5 5 L4.5 3 L6.5 5 M2.5 10 L4.5 12 L6.5 10" stroke="#444" fill="none" stroke-width="0.9"/></svg>
<div class="t" style="left:1704px;top:352px;font-size:11.5px">Number of Edges:&nbsp;&nbsp;&nbsp; 50 %</div>
<div class="grp" style="top:366px;height:30px"></div>
<div class="t" style="left:1699px;top:375px;font-size:11.5px">Fewer</div>
<div class="track" style="left:1741px;top:379px;width:131px"></div>
<svg class="thumb" style="left:1799px;top:374px" width="12" height="14" viewBox="0 0 12 14"><path d="M1.5 1.5 Q6 -0.5 10.5 1.5 L10.5 6 L6 12.5 L1.5 6 Z" fill="#fff" stroke="#9a9a9a" stroke-width="1"/></svg>
<div class="t" style="left:1886px;top:375px;font-size:11.5px">More</div>
<div class="btn" style="left:1694px;top:402px;width:60px;height:26px;line-height:24px;color:#7a7a7a">Defaults</div>
<div class="btn" style="left:1759px;top:402px;width:50px;height:26px;line-height:24px;color:#7a7a7a">Revert</div>
<div class="btn" style="left:1824px;top:402px;width:47px;height:26px;line-height:24px;background:linear-gradient(#f8f8f8,#e6e6e6);border-color:#9f9f9f">Apply</div>
<div class="a" style="left:1881px;top:403px;width:1px;height:24px;background:#c0c0c0;border-right:1px solid #fafafa"></div>
<svg class="a" style="left:1896px;top:406px" width="18" height="18" viewBox="0 0 18 18"><circle cx="9" cy="9" r="8" fill="#d0d0d0" stroke="#9a9a9a"/><path d="M5.5 5.5 L9 8.5 L12.5 5.5 M5.5 9.5 L9 12.5 L12.5 9.5" stroke="#333" stroke-width="1.3" fill="none"/></svg>

<div class="hdr" style="top:438px">Edge Blending<div class="x"><svg width="20" height="20" viewBox="0 0 20 20" style="position:absolute;left:0;top:0"><circle cx="9.8" cy="10" r="7" fill="#3d3a3a"/><path d="M7 7.2 L12.6 12.8 M12.6 7.2 L7 12.8" stroke="#fff" stroke-width="2.1"/></svg></div></div>
<div class="t" style="left:1694px;top:473px;font-size:11.5px">Blend Mask Width:</div>
<div class="a" style="left:1807px;top:470px;width:108px;height:21px;background:#fff;border:1px solid #c0c0c0;border-radius:4px;overflow:hidden"><div class="a" style="right:0;top:0;width:17px;height:21px;background:linear-gradient(#4fa0fb,#1c78f0)"></div></div>
<svg class="a" style="left:1898px;top:472px" width="17" height="18" viewBox="0 0 17 18"><path d="M5 7 L8.5 3.5 L12 7 M5 11 L8.5 14.5 L12 11" stroke="#fff" stroke-width="1.4" fill="none"/></svg>
<div class="t" style="left:1815px;top:474px;font-size:11.5px">Medium</div>
<div class="a" style="left:1685px;top:491px;width:7px;height:9px;background:#e4e4e4;border:1px solid #fff;border-radius:3px"></div>
<div class="t" style="left:1704px;top:499px;font-size:11.5px">Intelligent Blending:&nbsp;&nbsp;&nbsp; 1:3</div>
<div class="grp" style="top:513px;height:30px"></div>
<div class="t" style="left:1699px;top:521px;font-size:11.5px">Feather</div>
<div class="track" style="left:1750px;top:525px;width:118px"></div>
<svg class="thumb" style="left:1829px;top:520px" width="12" height="14" viewBox="0 0 12 14"><path d="M1.5 1.5 Q6 -0.5 10.5 1.5 L10.5 6 L6 12.5 L1.5 6 Z" fill="#fff" stroke="#9a9a9a" stroke-width="1"/></svg>
<div class="t" style="left:1881px;top:521px;font-size:11.5px">Smart</div>

<div class="hdr" style="top:554px">Tip<div class="x"><svg width="20" height="20" viewBox="0 0 20 20" style="position:absolute;left:0;top:0"><circle cx="9.8" cy="10" r="7" fill="#3d3a3a"/><path d="M7 7.2 L12.6 12.8 M12.6 7.2 L7 12.8" stroke="#fff" stroke-width="2.1"/></svg></div></div>
<div class="a" style="left:1694px;top:583px;width:224px;height:353px;background:#fff;border:1px solid #b9b9b9"></div>
<div class="a" style="left:1700px;top:589px;font-size:9.5px;line-height:12px;white-space:nowrap;color:#111;letter-spacing:0.33px">
<b>Clean All</b><br><br>Fill small holes inside any masked area(s),<br>with the same mask type (<b>Keep</b>, <b>Delete</b> etc)<br>surrounding the hole.<br><br>The maximum size of holes filled is<br>determined by the <b>Strength</b> setting of the<br><b>Clean Tool</b>.<br><br><span style="color:#1a1adb;text-decoration:underline">Learn More</span>
</div>
</div>

<!-- status -->
<div id="status">
<div class="a" style="left:675px;top:940px;width:29px;height:35px;border:1px solid #b4b4b4;box-shadow:inset 1px 1px 0 #fcfcfc"></div>
<svg class="a" style="left:682px;top:950px" width="16" height="16" viewBox="0 0 16 16"><circle cx="8" cy="8" r="6.5" fill="#d99a6c" stroke="#a06a40" stroke-width="0.6"/><path d="M5.7 5.7 L10.3 10.3 M10.3 5.7 L5.7 10.3" stroke="#fff" stroke-width="1.8"/></svg>
<div class="a" style="left:707px;top:940px;width:678px;height:35px;border:1px solid #b4b4b4;box-shadow:inset 1px 1px 0 #fcfcfc"></div>
<div class="track" style="left:710px;top:955px;width:673px;background:#cfcfcf;height:5px;border-radius:3px"></div>
<div class="a" style="left:1388px;top:940px;width:513px;height:35px;border:1px solid #b4b4b4;box-shadow:inset 1px 1px 0 #fcfcfc"></div>
<svg class="a" style="left:1390px;top:953px" width="11" height="11" viewBox="0 0 11 11"><rect x="0.5" y="0.5" width="10" height="10" rx="2" fill="url(#cbg)" stroke="#2a6ad8" stroke-width="0.8"/><defs><linearGradient id="cbg" x1="0" y1="0" x2="0" y2="1"><stop offset="0" stop-color="#6cb0fb"/><stop offset="1" stop-color="#1f7df3"/></linearGradient></defs><path d="M2.5 5.5 L4.5 8 L8.5 2.5" stroke="#fff" stroke-width="1.5" fill="none"/></svg>
<div class="t" style="left:1402px;top:952px;font-size:10px">Show Object Edges</div>
<div class="a" style="left:1503px;top:947px;width:1px;height:22px;background:#b8b8b8;border-right:1px solid #fafafa"></div>
<div class="t" style="left:1514px;top:952px;font-size:10px">Mask Opacity: 60%</div>
<div class="track" style="left:1614px;top:955px;width:84px"></div>
<svg class="thumb" style="left:1653px;top:950px" width="12" height="14" viewBox="0 0 12 14"><path d="M1.5 1.5 Q6 -0.5 10.5 1.5 L10.5 6 L6 12.5 L1.5 6 Z" fill="#fff" stroke="#9a9a9a" stroke-width="1"/></svg>
<div class="a" style="left:1707px;top:947px;width:1px;height:22px;background:#b8b8b8;border-right:1px solid #fafafa"></div>
<div class="t" style="left:1719px;top:952px;font-size:10px">Workspace Resolution:</div>
<div class="a" style="left:1833px;top:949px;width:64px;height:20px;background:#fff;border:1px solid #c0c0c0;border-radius:4px;overflow:hidden"><div class="a" style="right:0;top:0;width:17px;height:20px;background:linear-gradient(#4fa0fb,#1c78f0)"></div></div>
<svg class="a" style="left:1880px;top:950px" width="17" height="18" viewBox="0 0 17 18"><path d="M5 7 L8.5 3.5 L12 7 M5 11 L8.5 14.5 L12 11" stroke="#fff" stroke-width="1.4" fill="none"/></svg>
<div class="t" style="left:1842px;top:952px;font-size:10px">1:1</div>
<svg class="a" style="left:1906px;top:963px" width="14" height="14" viewBox="0 0 14 14"><path d="M3 13 L13 3 M7 13 L13 7 M11 13 L13 11" stroke="#9a9a9a" stroke-width="1"/></svg>
</div>

</body></html>
